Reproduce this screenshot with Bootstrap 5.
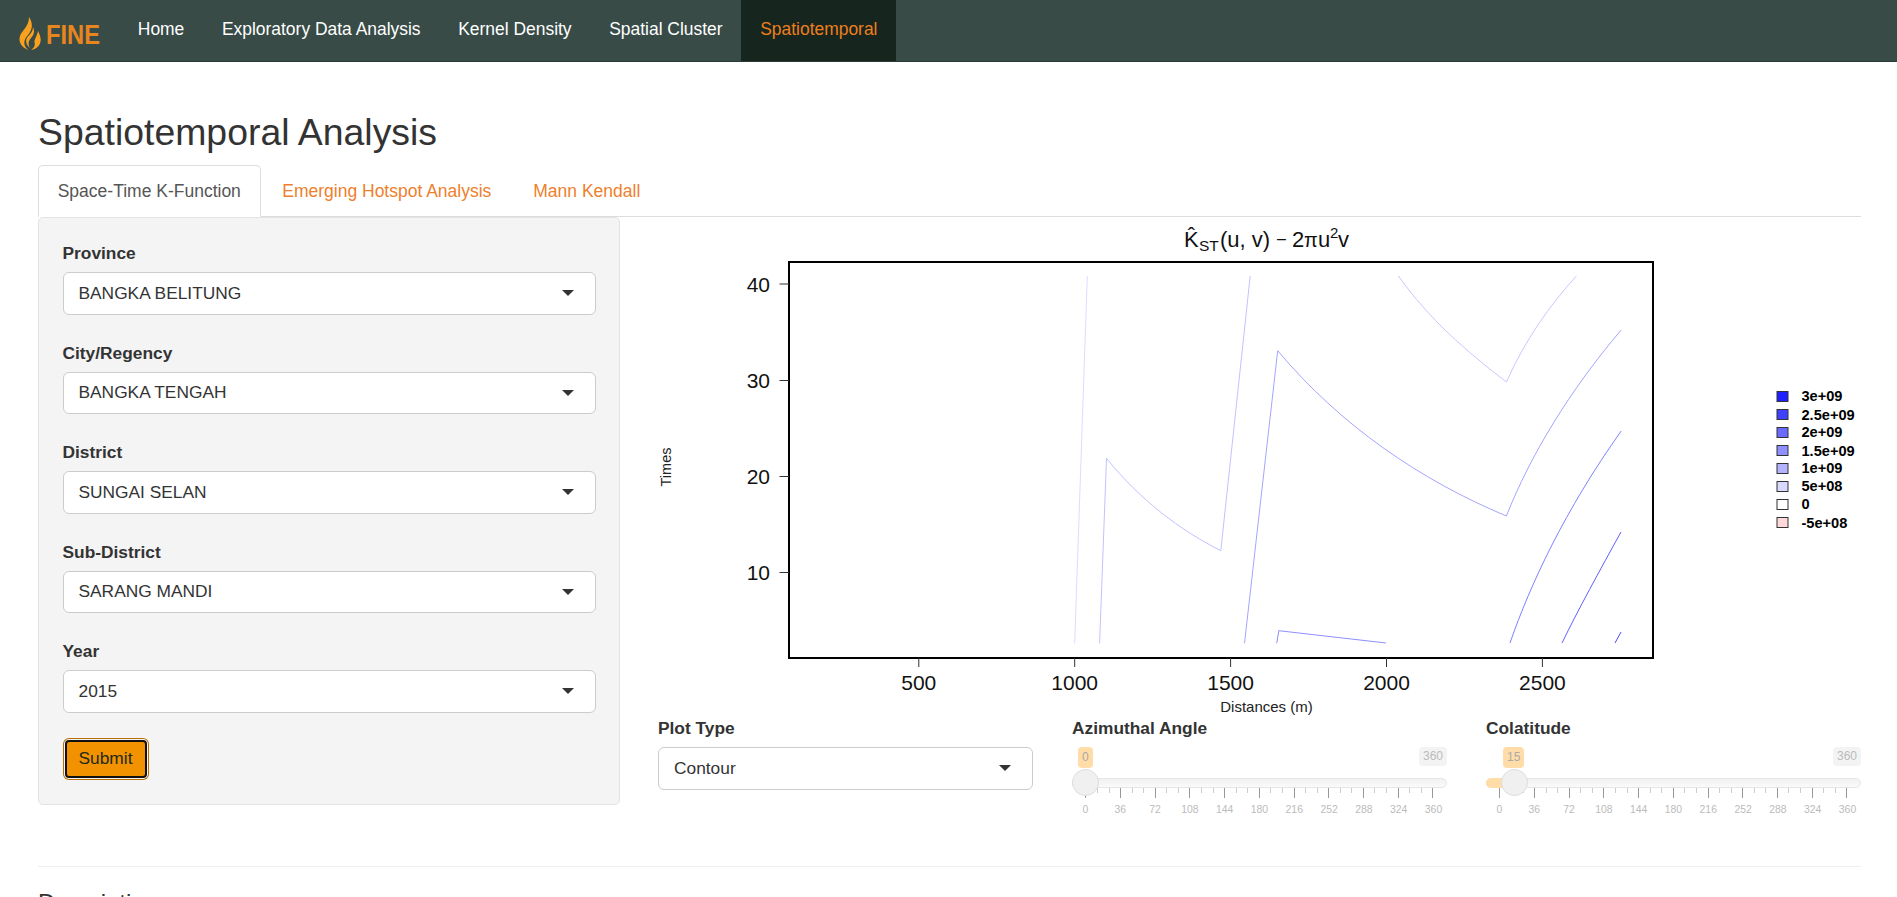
<!DOCTYPE html>
<html lang="en">
<head>
<meta charset="utf-8">
<title>Spatiotemporal Analysis</title>
<link rel="stylesheet" href="https://cdn.jsdelivr.net/npm/bootstrap@5.3.0/dist/css/bootstrap.min.css">
<style>
body{font-family:"Liberation Sans",Arial,sans-serif;font-size:17.33px;color:#333;background:#fff}
.fine-nav{--bs-navbar-nav-link-padding-x:18.8px;background:#384b47;height:62px;padding:0;border-bottom:1px solid #2a3a36;align-items:stretch;justify-content:flex-start}
.fine-brand{width:119px;flex:none;display:flex;align-items:center;padding:0;margin:0}
.fine-nav .navbar-nav{height:61px}
.fine-nav .nav-link{color:#fff;padding-top:0;padding-bottom:0;height:61px;line-height:58px;font-size:17.45px}
.fine-nav .nav-link.active{background:#17251f;color:#ee7f1c}
.page-wrap{padding:0 36px 0 38px}
.page-title{font-size:37.4px;font-weight:400;line-height:45px;margin:48px 0 10px;color:#333}
.fine-tabs{border-bottom:1px solid #ddd;height:52px}
.fine-tabs .nav-link{color:#ee7f2d;padding:0 18.7px;height:52px;line-height:50px;font-size:17.5px;margin:0 2.5px 0 0;border-radius:5px 5px 0 0}
.fine-tabs .nav-link.active{color:#555;border-color:#ddd #ddd #fff;margin-right:2px}
.side-well{width:582px;flex:none;height:588px;background:#f4f4f4;border:1px solid #e3e3e3;border-radius:5px;padding:22px 23px 22px 23.5px}
.field-label{display:block;font-weight:700;line-height:26px;margin:0 0 6px;color:#333}
.pick-box{height:42.5px;background:#fff;border:1px solid #ccc;border-radius:6px;padding:0 21px 0 15px;display:flex;align-items:center;justify-content:space-between;line-height:1;color:#333;font-size:17.33px}
.pick-caret{width:0;height:0;border-left:6px solid transparent;border-right:6px solid transparent;border-top:6px solid #333}
.side-field{margin-bottom:25px}
.go-btn{margin:2px;height:38px;width:82px;padding:0;background:#f39200;color:#1c2a1c;border:2px solid #111;border-radius:4px;font-size:17.33px;box-shadow:0 0 0 1px #f4f4f4,0 0 0 2px #b86f00}
.go-btn:hover{background:#f39200;color:#1c2a1c;border-color:#111}
.plot-col{width:1203px;flex:none}
.plot-svg{display:block;font-family:"Liberation Sans",Arial,sans-serif}
.ctrl-grid{display:grid;grid-template-columns:375px 375px 375px;column-gap:39px;margin-top:-2px}
.slide-bubbles{display:flex;justify-content:space-between;align-items:flex-start;height:31px}
.slide-val{background:#ffdca8;color:#aaa;font-size:12px;height:21px;line-height:20px;border-radius:4px;padding:0 4px;text-align:center}
.slide-max{background:#f3f3f3;color:#bbb;font-size:12px;height:19px;line-height:18px;border-radius:4px;padding:0 4px}
.slide-track{position:relative;height:10px;background:linear-gradient(#f1f1f1,#fafafa);border:1px solid #e6e6e6;border-radius:5px}
.slide-fill{position:absolute;left:-1px;top:-1px;height:10px;background:#ffdca8;border-radius:5px 0 0 5px}
.slide-knob{position:absolute;top:-10px;width:27px;height:27px;border-radius:50%;background:#f0f0f0;border:1px solid #ddd}
.slide-ticks{display:flex;justify-content:space-between;align-items:flex-start;height:10px;margin:0 13.4px}
.slide-ticks i{display:block;width:1px;height:5px;background:#ccc}
.slide-ticks i.maj{height:10px;background:#999}
.slide-nums{display:flex;justify-content:space-between;margin:5px 13.4px 0;height:14px}
.slide-nums span{width:0;display:flex;justify-content:center;font-size:10.4px;line-height:14px;color:#bbb}
.page-rule{margin:49px 0 0;border:0;border-top:1px solid #eee;opacity:1}
.desc-title{font-size:24px;font-weight:500;margin:22px 0 0;color:#333;line-height:1.2}
</style>
</head>
<body>
<nav class="navbar navbar-expand fine-nav">
  <a class="fine-brand" href="#" aria-label="FINE">
    <svg width="119" height="61" viewBox="0 0 119 61">
      <path d="M29 17C33 23 33 29 28 35C23 40 23 46 28.500 50C22 48 18 42 20 36C22 30 29 27 29 17Z" fill="#f9a11f"/>
      <path d="M33 27C35 31 34 35 31 38C28 41 28 45 30 48C26 45 25 40 27.500 37C30 34 33 32 33 27Z" fill="#f9a11f"/>
      <path d="M38 31C41 37 42 42 38.500 46C36.500 48.500 34 49.500 31 50C34 48 35.500 45 34.500 42.500C34 40 37 36 38 31Z" fill="#f9a11f"/>
      <text x="46" y="43.500" font-family="Liberation Sans" font-weight="700" font-size="28" fill="#e8861e" textLength="54" lengthAdjust="spacingAndGlyphs">FINE</text>
    </svg>
  </a>
  <ul class="navbar-nav">
    <li class="nav-item"><a class="nav-link" href="#">Home</a></li>
    <li class="nav-item"><a class="nav-link" href="#">Exploratory Data Analysis</a></li>
    <li class="nav-item"><a class="nav-link" href="#">Kernel Density</a></li>
    <li class="nav-item"><a class="nav-link" href="#">Spatial Cluster</a></li>
    <li class="nav-item"><a class="nav-link active" href="#">Spatiotemporal</a></li>
  </ul>
</nav>
<div class="page-wrap">
  <h1 class="page-title">Spatiotemporal Analysis</h1>
  <ul class="nav nav-tabs fine-tabs">
    <li class="nav-item"><a class="nav-link active" href="#">Space-Time K-Function</a></li>
    <li class="nav-item"><a class="nav-link" href="#">Emerging Hotspot Analysis</a></li>
    <li class="nav-item"><a class="nav-link" href="#">Mann Kendall</a></li>
  </ul>
  <div class="d-flex justify-content-between">
    <div class="side-well">
      <div class="side-field"><label class="field-label">Province</label><div class="pick-box"><span>BANGKA BELITUNG</span><span class="pick-caret"></span></div></div>
      <div class="side-field"><label class="field-label">City/Regency</label><div class="pick-box"><span>BANGKA TENGAH</span><span class="pick-caret"></span></div></div>
      <div class="side-field"><label class="field-label">District</label><div class="pick-box"><span>SUNGAI SELAN</span><span class="pick-caret"></span></div></div>
      <div class="side-field"><label class="field-label">Sub-District</label><div class="pick-box"><span>SARANG MANDI</span><span class="pick-caret"></span></div></div>
      <div class="side-field"><label class="field-label">Year</label><div class="pick-box"><span>2015</span><span class="pick-caret"></span></div></div>
      <button type="button" class="btn go-btn">Submit</button>
    </div>
    <div class="plot-col">
      <svg class="plot-svg" width="1203" height="500" viewBox="658 217 1203 500" fill="none">
        <!-- title -->
        <g fill="#111" font-size="22">
          <text x="1184" y="247">K&#770;</text>
          <text x="1199" y="251" font-size="15.500">ST</text>
          <text x="1220" y="247">(u, v)</text>
          <text x="1277" y="244" font-size="16">–</text>
          <text x="1292" y="247">2</text>
          <text x="1304" y="247" font-size="20">π</text>
          <text x="1318" y="247">u</text>
          <text x="1330" y="238" font-size="15">2</text>
          <text x="1338" y="247">v</text>
        </g>
        <!-- contours -->
        <g stroke-width="1">
          <path d="M1087.300 276L1074.700 643.300" stroke="#dcdcff"/>
          <path d="M1099.600 643.300L1106.500 458.300C1140 500 1180 530 1220.800 550.700L1250.200 276" stroke="#c2c2ff"/>
          <path d="M1398.400 276C1430 320 1465 350 1506.400 382C1525 340 1550 305 1576.400 276" stroke="#c8c8ff"/>
          <path d="M1244.500 643.300L1277.700 350.700C1340 425 1420 480 1506.400 516C1530 456 1570 390 1621.200 330" stroke="#a4a4ff"/>
          <path d="M1276.700 643.300L1278.800 630.700L1386 643" stroke="#8f8fff"/>
          <path d="M1510 643C1530 585 1565 510 1621.200 431" stroke="#8080ff"/>
          <path d="M1562 643C1578 610 1600 570 1621 532" stroke="#5f5fff"/>
          <path d="M1615 643L1621 632" stroke="#4a4aff"/>
        </g>
        <!-- frame -->
        <rect x="789" y="262" width="864" height="396" stroke="#000" stroke-width="2"/>
        <path d="M779.500 284H789M779.500 380.500H789M779.500 476.500H789M779.500 572.500H789M918.800 658V667M1074.700 658V667M1230.600 658V667M1386.500 658V667M1542.400 658V667" stroke="#333" stroke-width="1"/>
        <g fill="#111" font-size="21" text-anchor="end">
          <text x="770" y="291.500">40</text>
          <text x="770" y="388">30</text>
          <text x="770" y="484">20</text>
          <text x="770" y="580">10</text>
        </g>
        <g fill="#111" font-size="21" text-anchor="middle">
          <text x="918.800" y="690">500</text>
          <text x="1074.700" y="690">1000</text>
          <text x="1230.600" y="690">1500</text>
          <text x="1386.500" y="690">2000</text>
          <text x="1542.400" y="690">2500</text>
        </g>
        <text x="1266.500" y="712" fill="#222" font-size="15" text-anchor="middle">Distances (m)</text>
        <text transform="translate(671 467) rotate(-90)" fill="#222" font-size="14.500" text-anchor="middle">Times</text>
        <!-- legend -->
        <g stroke="#333" stroke-width="1">
          <rect x="1777" y="391.500" width="11" height="10" fill="#2020ff"/>
          <rect x="1777" y="409.500" width="11" height="10" fill="#4040ff"/>
          <rect x="1777" y="427.500" width="11" height="10" fill="#6a6aff"/>
          <rect x="1777" y="445.500" width="11" height="10" fill="#8f8fff"/>
          <rect x="1777" y="463.500" width="11" height="10" fill="#b3b3ff"/>
          <rect x="1777" y="481.500" width="11" height="10" fill="#d9d9ff"/>
          <rect x="1777" y="499.500" width="11" height="10" fill="#fff"/>
          <rect x="1777" y="517.500" width="11" height="10" fill="#ffd9d9"/>
        </g>
        <g fill="#000" font-size="14.600" font-weight="700">
          <text x="1801.500" y="401">3e+09</text>
          <text x="1801.500" y="419.500">2.5e+09</text>
          <text x="1801.500" y="437">2e+09</text>
          <text x="1801.500" y="455.500">1.5e+09</text>
          <text x="1801.500" y="473">1e+09</text>
          <text x="1801.500" y="491">5e+08</text>
          <text x="1801.500" y="509">0</text>
          <text x="1801.500" y="527.500">-5e+08</text>
        </g>
      </svg>
      <div class="ctrl-grid">
        <div>
          <label class="field-label">Plot Type</label>
          <div class="pick-box"><span>Contour</span><span class="pick-caret"></span></div>
        </div>
        <div>
          <label class="field-label">Azimuthal Angle</label>
          <div class="slide-bubbles"><span class="slide-val" style="margin-left:6px">0</span><span class="slide-max">360</span></div>
          <div class="slide-track"><span class="slide-knob" style="left:-1px"></span></div>
          <div class="slide-ticks"></div>
          <div class="slide-nums"></div>
        </div>
        <div>
          <label class="field-label">Colatitude</label>
          <div class="slide-bubbles"><span class="slide-val" style="margin-left:17px">15</span><span class="slide-max">360</span></div>
          <div class="slide-track"><span class="slide-fill" style="width:20px"></span><span class="slide-knob" style="left:13.500px"></span></div>
          <div class="slide-ticks"></div>
          <div class="slide-nums"></div>
        </div>
      </div>
    </div>
  </div>
  <hr class="page-rule">
  <h4 class="desc-title">Description</h4>
</div>
<script>
document.querySelectorAll('.slide-ticks').forEach(function(el){
  var h='';for(var i=0;i<=30;i++){h+='<i'+(i%3===0?' class="maj"':'')+'></i>';}el.innerHTML=h;
});
document.querySelectorAll('.slide-nums').forEach(function(el){
  var h='';for(var i=0;i<=10;i++){h+='<span>'+(i*36)+'</span>';}el.innerHTML=h;
});
</script>
<script src="https://cdn.jsdelivr.net/npm/bootstrap@5.3.0/dist/js/bootstrap.bundle.min.js"></script>
</body>
</html>
